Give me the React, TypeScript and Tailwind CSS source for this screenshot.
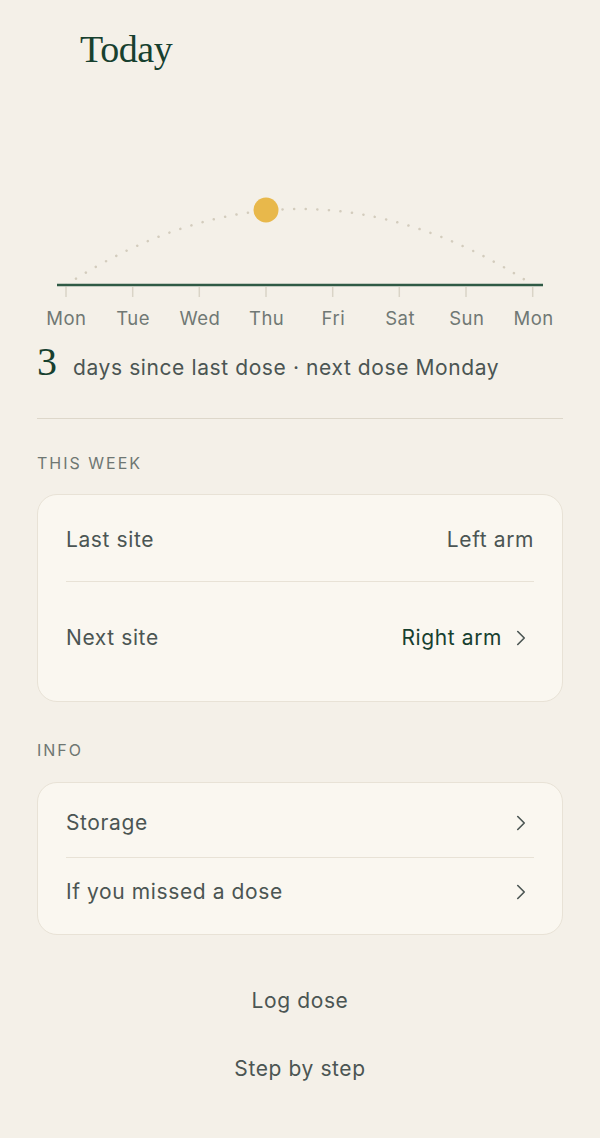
import { ChevronRight } from "lucide-react";

const days = ["Mon", "Tue", "Wed", "Thu", "Fri", "Sat", "Sun", "Mon"];
const ticks = [66, 132.7, 199.3, 266, 332.7, 399.3, 466, 532.7];

function Chevron() {
  return <ChevronRight size={26} strokeWidth={1.5} className="shrink-0 text-[#4b5553]" />;
}

export default function App() {
  return (
    <div className="min-h-[1138px] bg-[#f4f0e8] px-[37px] font-['Inter',sans-serif] text-[21px] leading-[24px] tracking-[0.6px] text-[#4b5553]">
      <h1 className="pl-[43px] pt-[27px] font-['Liberation_Serif',serif] text-[38px] leading-[44px] tracking-[-0.4px] text-[#17402f]">
        Today
      </h1>

      <svg
        className="mt-[119px] block"
        width="526"
        height="110"
        viewBox="37 190 526 110"
      >
        <path
          d="M66 285 Q 300 133 533 285"
          fill="none"
          stroke="#d3ccbd"
          strokeWidth="2.5"
          strokeDasharray="0.1 11.5"
          strokeLinecap="round"
        />
        <line x1="57" y1="285" x2="543" y2="285" stroke="#2f5a45" strokeWidth="2.5" />
        {ticks.map((x) => (
          <line key={x} x1={x} y1="287" x2={x} y2="297" stroke="#dad4c7" strokeWidth="1.5" />
        ))}
        <circle cx="266" cy="210" r="12.5" fill="#e8b84b" />
      </svg>

      <div className="-mx-[4px] mt-[6px] grid grid-cols-8 text-center text-[18.5px] leading-[24px] tracking-[0.5px] text-[#707874]">
        {days.map((d, i) => (
          <span key={i}>{d}</span>
        ))}
      </div>

      <div className="mt-[10px] flex items-baseline gap-[16px]">
        <span className="font-['Liberation_Serif',serif] text-[40px] leading-[44px] tracking-normal text-[#17402f]">3</span>
        <span>days since last dose · next dose Monday</span>
      </div>

      <div className="mt-[34px] border-t border-[#ddd7ca]" />

      <div className="mt-[34px] text-[16px] uppercase leading-[20px] tracking-[2px] text-[#6e7672]">
        This week
      </div>

      <div className="mt-[21px] rounded-[20px] border border-[#e8e2d6] bg-[#faf7f0] px-[28px]">
        <div className="flex items-center justify-between border-b border-[#e8e2d6] pt-[33px] pb-[29px]">
          <span>Last site</span>
          <span>Left arm</span>
        </div>
        <div className="flex h-[119px] items-center justify-between pb-[8px]">
          <span>Next site</span>
          <span className="flex items-center gap-[6px] text-[#17402f]">
            Right arm
            <Chevron />
          </span>
        </div>
      </div>

      <div className="mt-[38px] text-[16px] uppercase leading-[20px] tracking-[2px] text-[#6e7672]">
        Info
      </div>

      <div className="mt-[22px] rounded-[20px] border border-[#e8e2d6] bg-[#faf7f0] px-[28px]">
        <div className="flex h-[75px] items-center justify-between border-b border-[#e8e2d6] pt-[6px]">
          <span>Storage</span>
          <Chevron />
        </div>
        <div className="flex h-[76px] items-center justify-between pb-[8px]">
          <span>If you missed a dose</span>
          <Chevron />
        </div>
      </div>

      <div className="mt-[54px] flex flex-col items-center gap-[44px]">
        <button>Log dose</button>
        <button>Step by step</button>
      </div>
    </div>
  );
}
